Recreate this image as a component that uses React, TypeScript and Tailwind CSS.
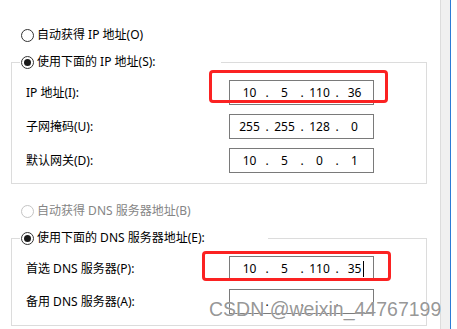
import React from 'react';

const FONT = { fontFamily: '"Noto Sans", "Noto Sans CJK SC", sans-serif' };

function Radio({ checked = false, disabled = false }: { checked?: boolean; disabled?: boolean }) {
  return (
    <span
      className={`flex h-[13px] w-[13px] shrink-0 items-center justify-center rounded-full border bg-white ${
        disabled ? 'border-[#c4c4c4]' : 'border-[#333333]'
      }`}
    >
      {checked && <span className="h-[7px] w-[7px] rounded-full bg-[#1a1a1a]" />}
    </span>
  );
}

function IpField({ parts, caret = false }: { parts: string[]; caret?: boolean }) {
  return (
    <div className="flex h-[25px] w-[145px] shrink-0 items-center border border-[#7a7a7a] bg-white pl-[5px] text-[12px] leading-[16px] text-black">
      {parts.map((p, i) => (
        <React.Fragment key={i}>
          {i > 0 && <span className="w-[6px] text-center">.</span>}
          <span className="relative w-[29px] text-center">
            {p}
            {caret && i === 3 && (
              <span className="absolute right-[5px] top-0 h-[16px] w-[1px] bg-black" />
            )}
          </span>
        </React.Fragment>
      ))}
    </div>
  );
}

function Row({ label, parts, caret }: { label: string; parts: string[]; caret?: boolean }) {
  return (
    <div className="flex items-center pl-[14px]">
      <span className="w-[203px] text-[12px] leading-[16px] text-black">{label}</span>
      <IpField parts={parts} caret={caret} />
    </div>
  );
}

export default function App() {
  return (
    <div className="relative flex h-[329px] w-[457px] overflow-hidden bg-white" style={FONT}>
      {/* dialog body */}
      <div className="w-[440px] shrink-0">
        <div className="mt-[26px] flex h-[18px] items-center gap-[3px] pl-[21px] text-[12px] leading-[16px] text-black">
          <Radio />
          <span>自动获得 IP 地址(O)</span>
        </div>

        <fieldset className="ml-[11px] mt-[9px] w-[416px] border border-[#dcdcdc] pb-[10px]">
          <legend className="ml-[8px] flex h-[18px] w-[201px] items-center gap-[3px] bg-white pl-[1px] text-[12px] leading-[16px] text-black">
            <Radio checked />
            <span>使用下面的 IP 地址(S):</span>
          </legend>
          <div className="mt-[9px] flex flex-col gap-[9px]">
            <Row label="IP 地址(I):" parts={['10', '5', '110', '36']} />
            <Row label="子网掩码(U):" parts={['255', '255', '128', '0']} />
            <Row label="默认网关(D):" parts={['10', '5', '0', '1']} />
          </div>
        </fieldset>

        <div className="mt-[18px] flex h-[18px] items-center gap-[3px] pl-[21px] text-[12px] leading-[16px] text-[#858585]">
          <Radio disabled />
          <span>自动获得 DNS 服务器地址(B)</span>
        </div>

        <fieldset className="ml-[11px] mt-[9px] w-[416px] border border-[#dcdcdc] pb-[11px]">
          <legend className="ml-[8px] flex h-[18px] w-[248px] items-center gap-[3px] bg-white pl-[1px] text-[12px] leading-[16px] text-black">
            <Radio checked />
            <span>使用下面的 DNS 服务器地址(E):</span>
          </legend>
          <div className="mt-[9px] flex flex-col gap-[8px]">
            <Row label="首选 DNS 服务器(P):" parts={['10', '5', '110', '35']} caret />
            <Row label="备用 DNS 服务器(A):" parts={['', '', '', '']} />
          </div>
        </fieldset>
      </div>

      {/* window edge */}
      <div className="w-[10px] shrink-0 border-l border-[#dcdcdc] bg-[#f0f0f0]" />
      <div className="w-[1px] shrink-0 bg-[#2b7bd6]" />
      <div className="flex-1 bg-white" />

      {/* annotations */}
      <div className="absolute left-[209px] top-[70px] h-[33px] w-[179px] rounded-[4px] border-[3px] border-[#fb2222]" />
      <div className="absolute left-[202px] top-[251px] h-[30px] w-[189px] rounded-[4px] border-[3px] border-[#fb2222]" />

      {/* watermark */}
      <div
        className="absolute left-[209px] top-[300px] text-[19.5px] leading-none text-[#8a8a8a]/90 [text-shadow:0_0_1px_#ffffff]"
        style={{ fontFamily: '"Liberation Sans", Arial, sans-serif' }}
      >
        CSDN @weixin_44767199
      </div>
    </div>
  );
}
